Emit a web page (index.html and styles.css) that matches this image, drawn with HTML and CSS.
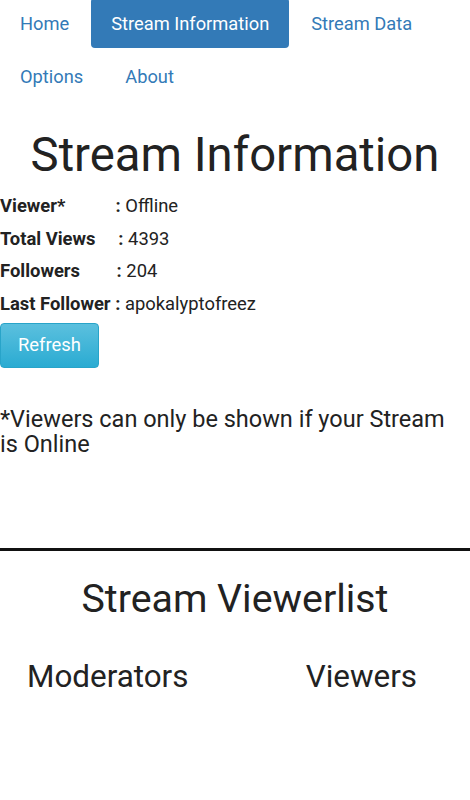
FILE: index.html
```html
<!DOCTYPE html>
<html lang="en">
<head>
    <meta charset="UTF-8">
    <meta name="viewport" content="width=device-width, initial-scale=1.0">
    <title>Stream Information</title>
    <link rel="stylesheet" href="styles.css">
</head>
<body>

<ul class="nav-pills">
    <li><a href="#">Home</a></li>
    <li class="active"><a href="#">Stream Information</a></li>
    <li><a href="#">Stream Data</a></li>
    <li><a href="#">Options</a></li>
    <li><a href="#">About</a></li>
</ul>

<div class="info">
    <h1>Stream Information</h1>
    <p><b>Viewer*&nbsp;&nbsp;&nbsp;&nbsp;&nbsp;&nbsp;&nbsp;&nbsp;&nbsp;&nbsp;&nbsp;:</b> Offline</p>
    <p><b>Total Views&nbsp;&nbsp;&nbsp;&nbsp;&nbsp;:</b> 4393</p>
    <p><b>Followers&nbsp;&nbsp;&nbsp;&nbsp;&nbsp;&nbsp;&nbsp;&nbsp;:</b> 204</p>
    <p><b>Last Follower :</b> apokalyptofreez</p>
    <button class="btn-info">Refresh</button>
    <p class="note">*Viewers can only be shown if your Stream is Online</p>
</div>

<hr>

<div class="viewerlist">
    <h2>Stream Viewerlist</h2>
    <div class="cols">
        <h3 class="col-mods">Moderators</h3>
        <h3 class="col-viewers">Viewers</h3>
    </div>
</div>

</body>
</html>
```

FILE: styles.css
```css
body {
    font-family: Roboto, "Noto Sans", sans-serif;
    margin: 0;
    padding: 0;
    background-color: #fff;
    color: #333;
}
.nav-pills {
    list-style: none;
    margin: -2px 0 0 0;
    padding: 0;
    display: flex;
    flex-wrap: wrap;
    column-gap: 2px;
    row-gap: 3px;
}
.nav-pills a {
    display: block;
    padding: 13px 20px 12px;
    font-size: 18.3px;
    line-height: 25px;
    color: #337ab7;
    text-decoration: none;
    border-radius: 4px;
}
.nav-pills li.active a {
    background-color: #337ab7;
    color: #fff;
}
.info h1 {
    font-size: 47.3px;
    font-weight: 400;
    text-align: center;
    margin: 26px 0 7px;
    line-height: 56px;
    color: #222;
}
.info p {
    font-size: 18.4px;
    margin: 0;
    line-height: 32.5px;
    color: #222;
}
.info b {
    font-weight: 700;
    color: #222;
}
.btn-info {
    margin-top: 3px;
    font-family: inherit;
    font-size: 18.4px;
    line-height: 24px;
    color: #fff;
    padding: 9px 17px 10px;
    border: 1px solid #28a4c9;
    border-radius: 4px;
    background-image: linear-gradient(to bottom, #5bc0de 0, #2aabd2 100%);
    cursor: pointer;
}
.info p.note {
    font-size: 23.5px;
    line-height: 25px;
    margin-top: 39px;
    padding-right: 14px;
}
hr {
    border: none;
    border-top: 3px solid #111;
    margin: 91px 0 0;
}
.viewerlist h2 {
    font-size: 39.3px;
    font-weight: 400;
    text-align: center;
    margin: 26px 0 0;
    line-height: 44px;
    color: #222;
}
.cols {
    display: flex;
    justify-content: space-between;
    padding: 0 53px 0 27px;
}
.cols h3 {
    font-size: 31.4px;
    font-weight: 400;
    margin: 36px 0 0;
    line-height: 40px;
    color: #222;
}
```
